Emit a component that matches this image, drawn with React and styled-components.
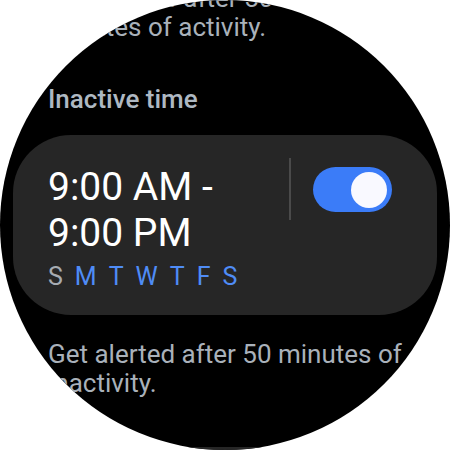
import React from "react";
import styled, { createGlobalStyle } from "styled-components";

const GlobalStyle = createGlobalStyle`
  html, body { margin: 0; padding: 0; background: #ffffff; }
  body { font-family: Roboto, "Liberation Sans", sans-serif; }
`;

const Screen = styled.div`
  width: 450px;
  height: 450px;
  border-radius: 50%;
  background: #000;
  overflow: hidden;
  display: flex;
  flex-direction: column;
  padding: 0 13px;
  box-sizing: border-box;
`;

const Paragraph = styled.p`
  margin: ${(p) => p.$margin || "0"};
  padding-left: 35px;
  font-size: 26px;
  line-height: 29px;
  color: #a9b1ba;
  white-space: nowrap;
`;

const SectionTitle = styled.h3`
  margin: 42px 0 0;
  padding-left: 35px;
  font-size: 26px;
  line-height: 30px;
  font-weight: 500;
  color: #aeb8c2;
`;

const Card = styled.div`
  margin-top: ${(p) => p.$mt || "21px"};
  height: ${(p) => p.$h || "180px"};
  flex-shrink: 0;
  border-radius: 58px;
  background: #262626;
  box-sizing: border-box;
  padding: 29px 45px 0 35px;
  display: grid;
  grid-template-columns: 1fr auto auto;
  align-items: start;
`;

const Info = styled.div`
  display: flex;
  flex-direction: column;
  gap: 7px;
`;

const Time = styled.div`
  font-size: 39px;
  line-height: 46px;
  color: #ffffff;
`;

const Days = styled.div`
  display: flex;
  gap: 12px;
  font-size: 25px;
  line-height: 28px;
`;

const Day = styled.span`
  color: ${(p) => (p.$on ? "#4f8cf6" : "#a6acb2")};
`;

const Divider = styled.div`
  width: 2px;
  height: 62px;
  margin-top: -6px;
  background: #4a4a4a;
  margin-right: 22px;
`;

const Toggle = styled.div`
  width: 79px;
  height: 45px;
  margin-top: 3px;
  border-radius: 23px;
  background: #3b7cf8;
  display: flex;
  align-items: center;
  justify-content: flex-end;
  padding-right: 5px;
  box-sizing: border-box;
`;

const Thumb = styled.div`
  width: 36px;
  height: 36px;
  border-radius: 50%;
  background: #f9f9ff;
`;

const days = [
  ["S", false],
  ["M", true],
  ["T", true],
  ["W", true],
  ["T", true],
  ["F", true],
  ["S", true],
];

export default function App() {
  return (
    <>
      <GlobalStyle />
      <Screen>
        <Paragraph $margin="-16px 0 0">
          Alert starts after 50
          <br />
          minutes of activity.
        </Paragraph>
        <SectionTitle>Inactive time</SectionTitle>
        <Card>
          <Info>
            <Time>
              9:00 AM -
              <br />
              9:00 PM
            </Time>
            <Days>
              {days.map(([d, on], i) => (
                <Day key={i} $on={on}>
                  {d}
                </Day>
              ))}
            </Days>
          </Info>
          <Divider />
          <Toggle>
            <Thumb />
          </Toggle>
        </Card>
        <Paragraph $margin="25px 0 0">
          Get alerted after 50 minutes of
          <br />
          inactivity.
        </Paragraph>
        <Card $mt="49px" $h="120px" />
      </Screen>
    </>
  );
}
